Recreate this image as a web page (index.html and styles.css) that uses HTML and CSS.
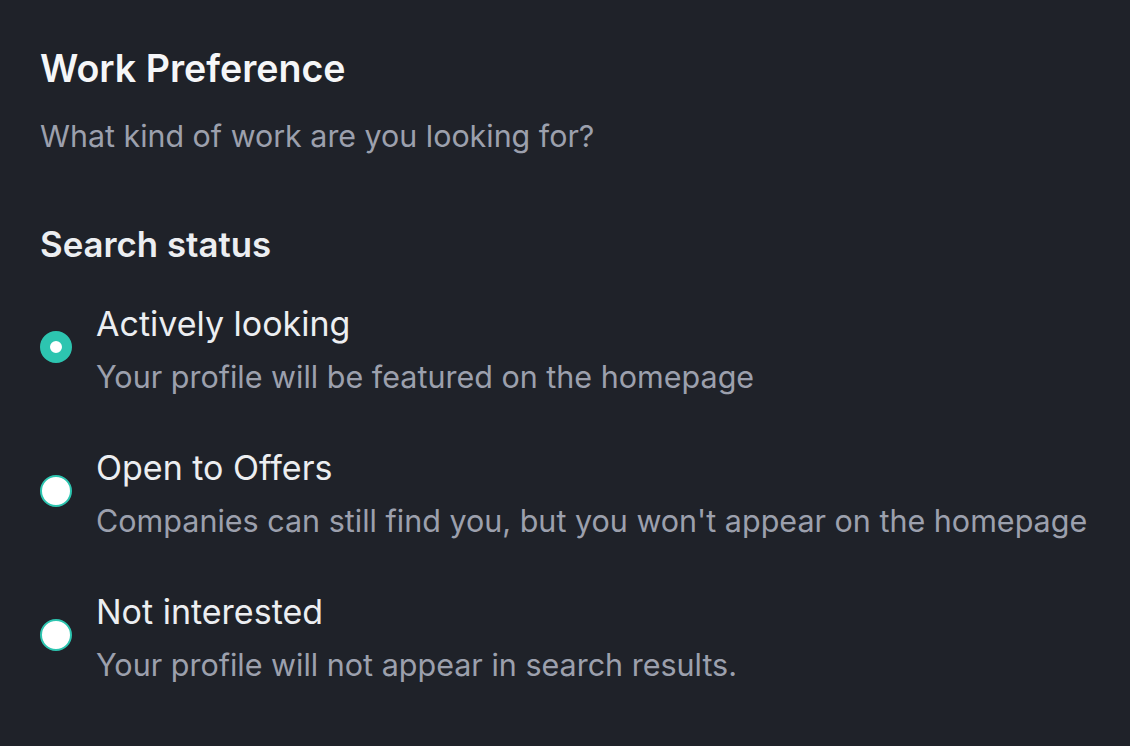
FILE: index.html
```html
<!DOCTYPE html>
<html>
<head>
<meta charset="utf-8">
<link rel="stylesheet" href="styles.css">
</head>
<body>
<main class="page">
  <h1 class="title">Work Preference</h1>
  <p class="subtitle">What kind of work are you looking for?</p>
  <section class="group" role="radiogroup" aria-labelledby="status-legend">
    <h2 class="legend" id="status-legend">Search status</h2>
    <div class="options">
      <label class="option">
        <input type="radio" name="status" class="radio" checked>
        <span class="text">
          <span class="label">Actively looking</span>
          <span class="desc">Your profile will be featured on the homepage</span>
        </span>
      </label>
      <label class="option">
        <input type="radio" name="status" class="radio">
        <span class="text">
          <span class="label">Open to Offers</span>
          <span class="desc">Companies can still find you, but you won't appear on the homepage</span>
        </span>
      </label>
      <label class="option">
        <input type="radio" name="status" class="radio">
        <span class="text">
          <span class="label">Not interested</span>
          <span class="desc">Your profile will not appear in search results.</span>
        </span>
      </label>
    </div>
  </section>
</main>
</body>
</html>
```
FILE: styles.css
```css
html, body {
  margin: 0;
  padding: 0;
  background: #1f2229;
  height: 100%;
}
body {
  font-family: Inter, "Noto Sans", sans-serif;
  -webkit-font-smoothing: antialiased;
}
.page {
  padding: 48px 40px 0 40px;
}
.title {
  margin: 0;
  font-size: 37.6px;
  line-height: 42px;
  font-weight: 600;
  color: #f5f6f8;
}
.subtitle {
  margin: 26px 0 0 0;
  font-size: 30.4px;
  line-height: 40px;
  color: #9ca0ad;
}
.group {
  margin: 68px 0 0 0;
}
.legend {
  margin: 0;
  font-size: 34.8px;
  line-height: 40px;
  font-weight: 600;
  color: #eceef1;
}
.options {
  display: flex;
  flex-direction: column;
  gap: 51px;
  margin-top: 40px;
}
.option {
  display: flex;
  align-items: flex-start;
  gap: 24px;
}
.radio {
  appearance: none;
  -webkit-appearance: none;
  margin: 27px 0 0 0;
  flex: none;
  width: 32px;
  height: 32px;
  border-radius: 50%;
  background: #ffffff;
  border: 2px solid #2dc5b0;
  box-sizing: border-box;
}
.radio:checked {
  border-width: 10px;
}
.text {
  display: flex;
  flex-direction: column;
  gap: 13px;
}
.label {
  font-size: 34px;
  line-height: 40px;
  color: #eceef1;
}
.desc {
  font-size: 30.5px;
  line-height: 40px;
  color: #9ca0ad;
}
```
